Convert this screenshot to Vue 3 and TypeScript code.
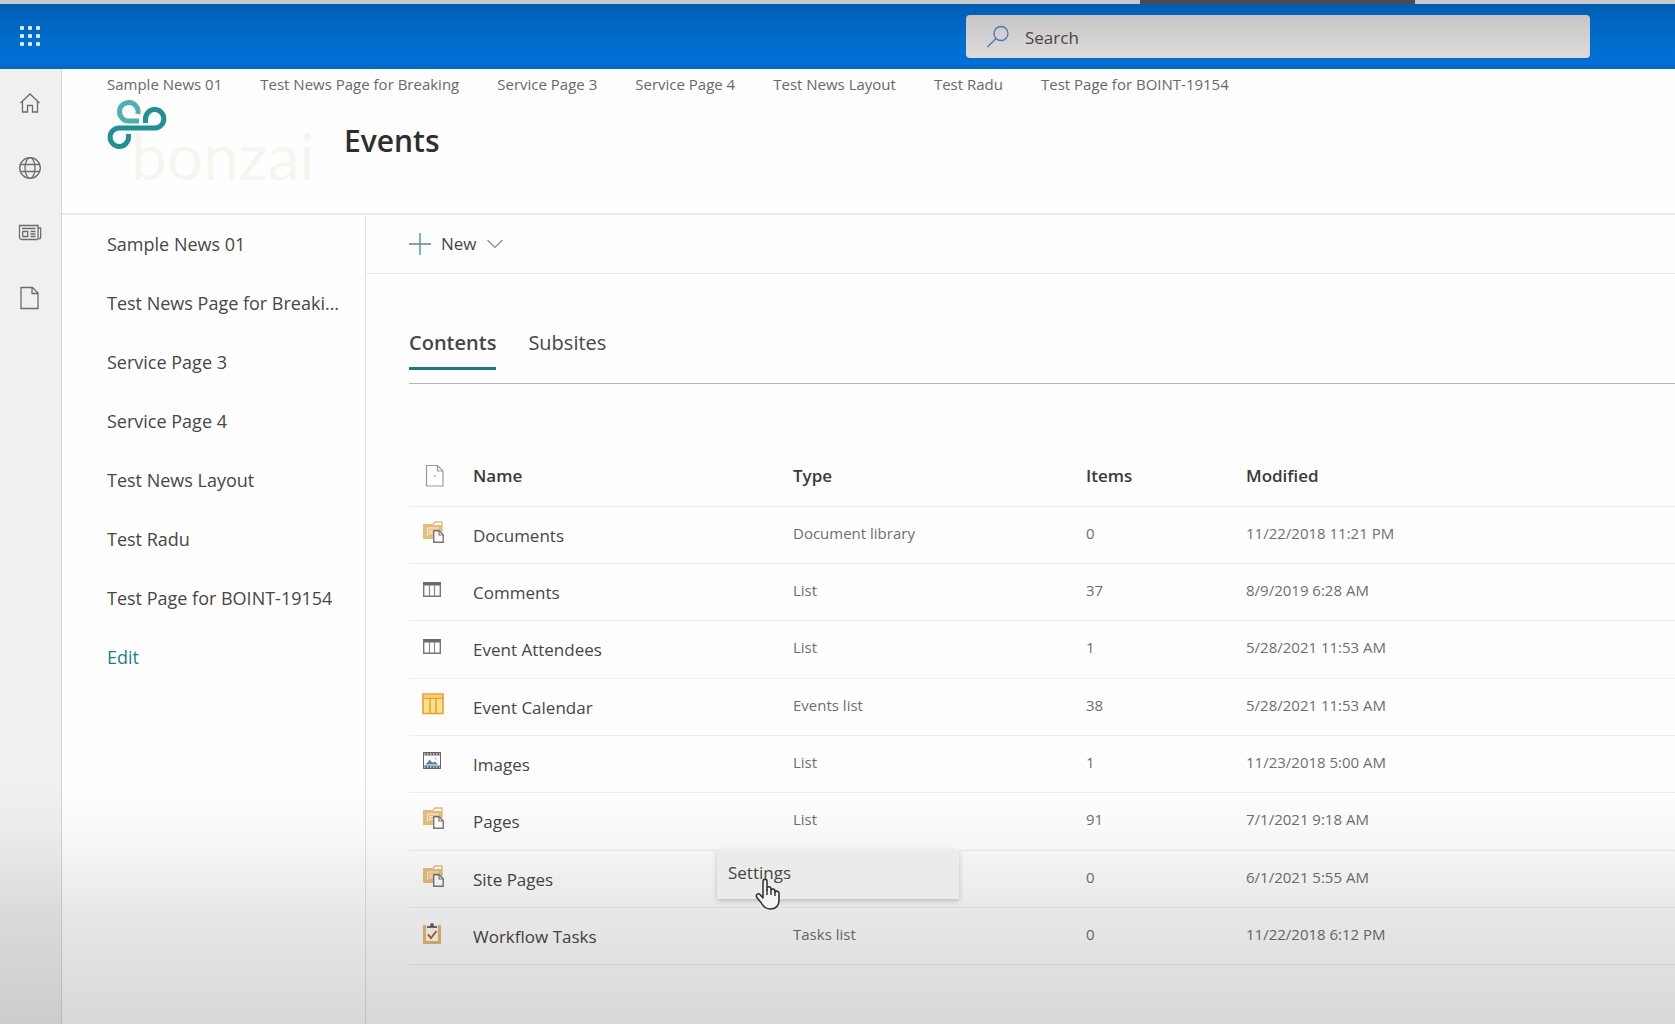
<script setup lang="ts">
import { ref } from 'vue'

type IconKind = 'library' | 'list' | 'calendar' | 'images' | 'tasks'

interface ContentRow {
  name: string
  icon: IconKind
  type: string
  items: number
  modified: string
  menu?: boolean
}

const links: string[] = [
  'Sample News 01',
  'Test News Page for Breaking',
  'Service Page 3',
  'Service Page 4',
  'Test News Layout',
  'Test Radu',
  'Test Page for BOINT-19154',
]

const rows: ContentRow[] = [
  { name: 'Documents', icon: 'library', type: 'Document library', items: 0, modified: '11/22/2018 11:21 PM' },
  { name: 'Comments', icon: 'list', type: 'List', items: 37, modified: '8/9/2019 6:28 AM' },
  { name: 'Event Attendees', icon: 'list', type: 'List', items: 1, modified: '5/28/2021 11:53 AM' },
  { name: 'Event Calendar', icon: 'calendar', type: 'Events list', items: 38, modified: '5/28/2021 11:53 AM' },
  { name: 'Images', icon: 'images', type: 'List', items: 1, modified: '11/23/2018 5:00 AM' },
  { name: 'Pages', icon: 'library', type: 'List', items: 91, modified: '7/1/2021 9:18 AM' },
  { name: 'Site Pages', icon: 'library', type: '', items: 0, modified: '6/1/2021 5:55 AM', menu: true },
  { name: 'Workflow Tasks', icon: 'tasks', type: 'Tasks list', items: 0, modified: '11/22/2018 6:12 PM' },
]

const query = ref('')
const tabs = ['Contents', 'Subsites'] as const
const activeTab = ref<(typeof tabs)[number]>('Contents')
</script>

<template>
  <div class="page">
    <div class="strip"><span class="strip-tab"></span></div>

    <header class="suite">
      <button class="waffle" type="button" aria-label="App launcher">
        <svg width="22" height="22" viewBox="0 0 22 22" fill="#dcebfa">
          <template v-for="r in 3" :key="r">
            <rect v-for="c in 3" :key="c" :x="c * 8 - 7" :y="r * 8 - 7" width="4" height="4" rx="1" />
          </template>
        </svg>
      </button>
      <label class="search">
        <svg width="24" height="24" viewBox="0 0 24 24" fill="none" stroke="#4a74b8" stroke-width="1.3">
          <circle cx="15" cy="8.500" r="7" />
          <path d="M10 13.500 1.500 22" />
        </svg>
        <input v-model="query" type="text" placeholder="Search" aria-label="Search" />
      </label>
    </header>

    <div class="body">
      <nav class="rail" aria-label="App bar">
        <a href="#" aria-label="Home">
          <svg width="24" height="24" viewBox="0 0 24 24" fill="none" stroke="#6c6c6a" stroke-width="1.3">
            <path d="M2.500 12 12 3l9.500 9M4.500 10.500V21h5v-6.500h5V21h5V10.500" />
          </svg>
        </a>
        <a href="#" aria-label="Sites">
          <svg width="24" height="24" viewBox="0 0 24 24" fill="none" stroke="#6c6c6a" stroke-width="1.3">
            <circle cx="12" cy="12" r="10.300" />
            <ellipse cx="12" cy="12" rx="5" ry="10.300" />
            <path d="M2.500 8.500h19M2.500 15.500h19" />
          </svg>
        </a>
        <a href="#" aria-label="News">
          <svg width="24" height="24" viewBox="0 0 24 24" fill="none" stroke="#6c6c6a" stroke-width="1.300">
            <path d="M20 18.500H4a2.500 2.500 0 0 1-2.500-2.500V4.500H20v12a1.300 1.300 0 0 0 2.600 0V7H20M4 7.500h13.500M12.500 10.500h5M12.500 13h5M12.500 15.500h5" />
            <path d="M4.700 10.500h5v5h-5z" />
          </svg>
        </a>
        <a href="#" aria-label="Files">
          <svg width="24" height="24" viewBox="0 0 24 24" fill="none" stroke="#6c6c6a" stroke-width="1.3">
            <path d="M3 1.500h11.500l5.500 5.500v15.500H3zM14 1.500V7.500h6" />
          </svg>
        </a>
      </nav>

      <div class="site">
        <div class="site-header">
          <nav class="top-links" aria-label="Hub">
            <a v-for="link in links" :key="link" href="#">{{ link }}</a>
          </nav>
          <div class="brand">
            <svg class="logo" width="206" height="108" viewBox="0 0 206 108" role="img" aria-label="bonzai">
              <text x="24" y="83" font-size="64" fill="#f6f6f1">bonzai</text>
              <g fill="none" stroke-width="5">
                <path d="M32 24H22.500A9.300 9.300 0 1 1 30.800 17" stroke="#4fb0b0" />
                <path d="M38.500 26V22A9.200 9.200 0 1 1 48 31H12A9.200 9.200 0 1 0 21.500 40.500V37" stroke="#1f9094" />
              </g>
            </svg>
            <h1>Events</h1>
          </div>
        </div>

        <div class="columns">
          <nav class="side" aria-label="Site">
            <a v-for="link in links" :key="link" href="#">{{ link }}</a>
            <a class="edit" href="#">Edit</a>
          </nav>

          <main class="main">
            <div class="commands">
              <button class="new" type="button">
                <svg width="22" height="22" viewBox="0 0 22 22" fill="none" stroke-width="1.500">
                  <path d="M0 11h22" stroke="#6b8088" />
                  <path d="M11 0v22" stroke="#4c9fae" />
                </svg>
                <span>New</span>
                <svg width="16" height="10" viewBox="0 0 16 10" fill="none" stroke="#8a8a8a" stroke-width="1.2">
                  <path d="M.5 1 8 8.500 15.500 1" />
                </svg>
              </button>
            </div>

            <div class="content">
              <div class="tabs" role="tablist">
                <button
                  v-for="tab in tabs"
                  :key="tab"
                  type="button"
                  role="tab"
                  :aria-selected="tab === activeTab"
                  :class="{ active: tab === activeTab }"
                  @click="activeTab = tab"
                >
                  {{ tab }}
                </button>
              </div>

              <table>
                <colgroup>
                  <col class="c-icon" /><col class="c-name" /><col class="c-type" /><col class="c-items" /><col />
                </colgroup>
                <thead>
                  <tr>
                    <th class="file" aria-label="File type">
                      <svg width="20" height="24" viewBox="0 0 20 24" fill="none" stroke="#9a9a9a" stroke-width="1.2">
                        <path d="M1.500 1.500h11l5.500 5.500v15h-16.500zM12.500 1.500V7h5.500" />
                        <path d="M9 12h1.500" stroke-width="1.500" />
                      </svg>
                    </th>
                    <th>Name</th>
                    <th>Type</th>
                    <th>Items</th>
                    <th>Modified</th>
                  </tr>
                </thead>
                <tbody>
                  <tr v-for="row in rows" :key="row.name">
                    <td class="icon">
                      <svg v-if="row.icon === 'library'" width="22" height="22" viewBox="0 0 22 22" fill="none">
                        <path d="M11 3.500 13 1h7v10" stroke="#e8bd77" stroke-width="1.400" />
                        <path d="M1 3h9l2 1h8v6h-8v8H1z" fill="#e8bd77" />
                        <path d="M5.500 15V7h11M8 14V9.500h8M8 12h4M11.500 9.500v4" stroke="#fff4df" />
                        <path d="M11.700 9.700h5.500l4 4v7.600h-9.500z" fill="#fff" stroke="#777" stroke-width="1.400" />
                        <path d="M17 10v4h4" stroke="#777" stroke-width="1.200" />
                      </svg>
                      <svg v-else-if="row.icon === 'list'" width="22" height="22" viewBox="0 0 22 22" fill="none">
                        <path d="M1.700 4.700h16.600v13.600H1.700z" fill="#fff" stroke="#777" stroke-width="1.400" />
                        <path d="M1 4h18v3.500H1z" fill="#6c6c6c" />
                        <path d="M7.500 7v11M12.500 7v11" stroke="#8a8a8a" stroke-width="1.200" />
                      </svg>
                      <svg v-else-if="row.icon === 'calendar'" width="22" height="22" viewBox="0 0 22 22" fill="none">
                        <path d="M1 1h20v19.500H1z" fill="#fce08c" stroke="#eca02c" stroke-width="1.600" />
                        <path d="M1 5.300h20M8 5v15M14 5v15" stroke="#eca02c" stroke-width="1.500" />
                        <path d="M2 2h18v3H2z" fill="#f8cd6c" />
                      </svg>
                      <svg v-else-if="row.icon === 'images'" width="22" height="22" viewBox="0 0 22 22" fill="none">
                        <path d="M1.500 2.500h17v16h-17z" fill="#fff" stroke="#666" />
                        <path d="M1 4h18M1 17h18" stroke="#666" stroke-width="3" />
                        <path d="M2 4h16M2 17h16" stroke="#fff" stroke-width="1.200" stroke-dasharray="1.500 1.500" />
                        <path d="M3.500 14.500c1-2 2-1 4-5 1.500 1 2 3 3.500 3l2-1 3 3z" fill="#4d86b4" />
                        <circle cx="13.500" cy="8.500" r="1.300" fill="#c9cdd2" />
                      </svg>
                      <svg v-else width="22" height="22" viewBox="0 0 22 22" fill="none">
                        <path d="M2.500 3v17.500h15V3" stroke="#e6b871" stroke-width="3" />
                        <path d="M4 2.500h12V19H4z" fill="#fbfaf8" />
                        <path d="M5 6V4h3c0-4 4-4 4 0h3v2z" fill="#6a6a6a" />
                        <path d="m6 12.500 3 3.500 5.500-7" stroke="#d05a2c" stroke-width="2" />
                      </svg>
                    </td>
                    <td class="name">
                      <a href="#">{{ row.name }}</a>
                      <div v-if="row.menu" class="menu" role="menu">
                        <button type="button" role="menuitem">Settings</button>
                        <svg class="pointer" width="26" height="34" viewBox="0 0 26 34">
                          <path
                            d="M8 21V4.500C8 1.500 12 1.500 12 4.500V13v-2c1-2 4-1.500 4 1v1c1-2 4-1 4 1v1c1-1.500 4-1 4 1.500V23c0 6-3 9-9 9-5 0-7-3-9-6.500L1.500 20C.5 17 3.500 16 5 17.500z"
                            fill="#f4f4f3" stroke="#2b2b2b" stroke-width="1.500" stroke-linejoin="round"
                          />
                          <path d="M12 12v6M16 13v5M20 14v5" stroke="#2b2b2b" stroke-width="1.400" />
                        </svg>
                      </div>
                    </td>
                    <td>{{ row.type }}</td>
                    <td>{{ row.items }}</td>
                    <td>{{ row.modified }}</td>
                  </tr>
                </tbody>
              </table>
            </div>
          </main>
        </div>
      </div>
    </div>
  </div>
</template>

<style>
body {
  background: #fefefe;
}
</style>

<style scoped>
* {
  box-sizing: border-box;
}
.page {
  position: relative;
  display: flex;
  flex-direction: column;
  min-height: 100vh;
  overflow: hidden;
  background: #fefefe;
  color: #484644;
  font-family: 'Open Sans', 'Noto Sans', sans-serif;
  font-size: 17px;
  line-height: 24px;
}
/* Shade that deepens towards the foot of the page */
.page::after {
  content: '';
  position: absolute;
  inset: auto 0 0;
  height: 244px;
  background: linear-gradient(rgba(0, 0, 0, 0), rgba(0, 0, 0, 0.02) 20%, rgba(0, 0, 0, 0.09) 55%, rgba(0, 0, 0, 0.15));
  pointer-events: none;
}
a {
  color: inherit;
  text-decoration: none;
}
button,
input {
  padding: 0;
  border: 0;
  background: none;
  color: inherit;
  font: inherit;
}
svg {
  display: block;
  flex: none;
}
.strip {
  display: flex;
  justify-content: flex-end;
  height: 4px;
  padding-right: 260px;
  background: #c9cac8;
}
.strip-tab {
  width: 275px;
  background: #484c50;
}
.suite {
  display: flex;
  align-items: center;
  justify-content: space-between;
  height: 65px;
  padding: 0 85px 0 19px;
  background: linear-gradient(#005eb2, #006ccb 55%, #0070da 90%, #0068c4);
}
.waffle {
  padding-bottom: 2px;
}
.search {
  display: flex;
  align-items: center;
  gap: 15px;
  width: 40%;
  max-width: 624px;
  height: 43px;
  padding: 0 20px;
  border-radius: 4px;
  background: linear-gradient(#c7c5c2, #d5d2d4 60%, #dedbd5);
}
.search input {
  flex: 1;
  min-width: 0;
  padding-top: 2px;
  outline: 0;
}
.search input::placeholder {
  color: #484644;
  opacity: 1;
}
.body {
  display: flex;
  flex: 1;
}
.rail {
  display: flex;
  flex: none;
  flex-direction: column;
  align-items: center;
  gap: 41px;
  width: 62px;
  padding-top: 22px;
  padding-right: 2px;
  border-right: 1px solid #d8d8d6;
  background: #f0f0ee;
}
.site {
  display: flex;
  flex: 1;
  flex-direction: column;
  min-width: 0;
}
.site-header {
  height: 146px;
  padding: 4px 45px 0;
  border-bottom: 2px solid #ececec;
}
.top-links {
  display: flex;
  gap: 38px;
  height: 24px;
  color: #6a6866;
  font-size: 15px;
  line-height: 22px;
  white-space: nowrap;
}
.brand {
  display: flex;
  align-items: flex-start;
  gap: 31px;
}
.logo {
  font-family: Lato, 'Open Sans', sans-serif;
}
h1 {
  margin: 24px 0 0;
  color: #2f2e2d;
  font-size: 30px;
  font-weight: 600;
  line-height: 40px;
}
.columns {
  display: flex;
  flex: 1;
}
.side {
  display: flex;
  flex: none;
  flex-direction: column;
  gap: 35px;
  width: 304px;
  padding: 17px 24px 0 45px;
  border-right: 1px solid #e2e2e2;
  font-size: 18px;
}
.side a {
  overflow: hidden;
  text-overflow: ellipsis;
  white-space: nowrap;
}
.side .edit {
  color: #1c8088;
}
.main {
  flex: 1;
  min-width: 0;
}
.commands {
  display: flex;
  align-items: center;
  height: 59px;
  padding-left: 43px;
  border-bottom: 1px solid #eaeaea;
}
.new {
  display: flex;
  align-items: center;
  gap: 10px;
}
.content {
  padding: 52px 0 56px 43px;
}
.tabs {
  display: flex;
  gap: 32px;
  height: 58px;
  border-bottom: 1px solid #b4b4b4;
  font-size: 20px;
  line-height: 34px;
}
.tabs button {
  height: 44px;
  padding-bottom: 7px;
  border-bottom: 3px solid transparent;
}
.tabs .active {
  border-color: #1a7a83;
  font-weight: 600;
}
table {
  width: 100%;
  margin-top: 63px;
  border-collapse: collapse;
  table-layout: fixed;
}
.c-icon {
  width: 64px;
}
.c-name {
  width: 320px;
}
.c-type {
  width: 293px;
}
.c-items {
  width: 160px;
}
th,
td {
  padding: 0;
  border-bottom: 1px solid #ededed;
  text-align: left;
  vertical-align: top;
}
th {
  height: 59px;
  padding-top: 17px;
  color: #3b3a39;
  font-weight: 600;
}
td {
  height: 57px;
  padding-top: 14px;
  color: #706e6c;
  font-size: 15px;
}
tr:nth-child(3n) td {
  height: 58px;
}
.file {
  padding-left: 16px;
}
td.icon {
  padding-left: 13px;
}
.name {
  position: relative;
  padding-top: 17px;
  color: #484644;
  font-size: 17px;
}
.menu {
  position: absolute;
  top: -1px;
  left: 244px;
  z-index: 1;
  width: 242px;
  background: #ebebe9;
  box-shadow: 0 2px 5px rgba(0, 0, 0, 0.2);
}
.menu button {
  width: 100%;
  height: 49px;
  padding: 0 0 2px 11px;
  text-align: left;
}
.pointer {
  position: absolute;
  top: 27px;
  left: 38px;
}
</style>
